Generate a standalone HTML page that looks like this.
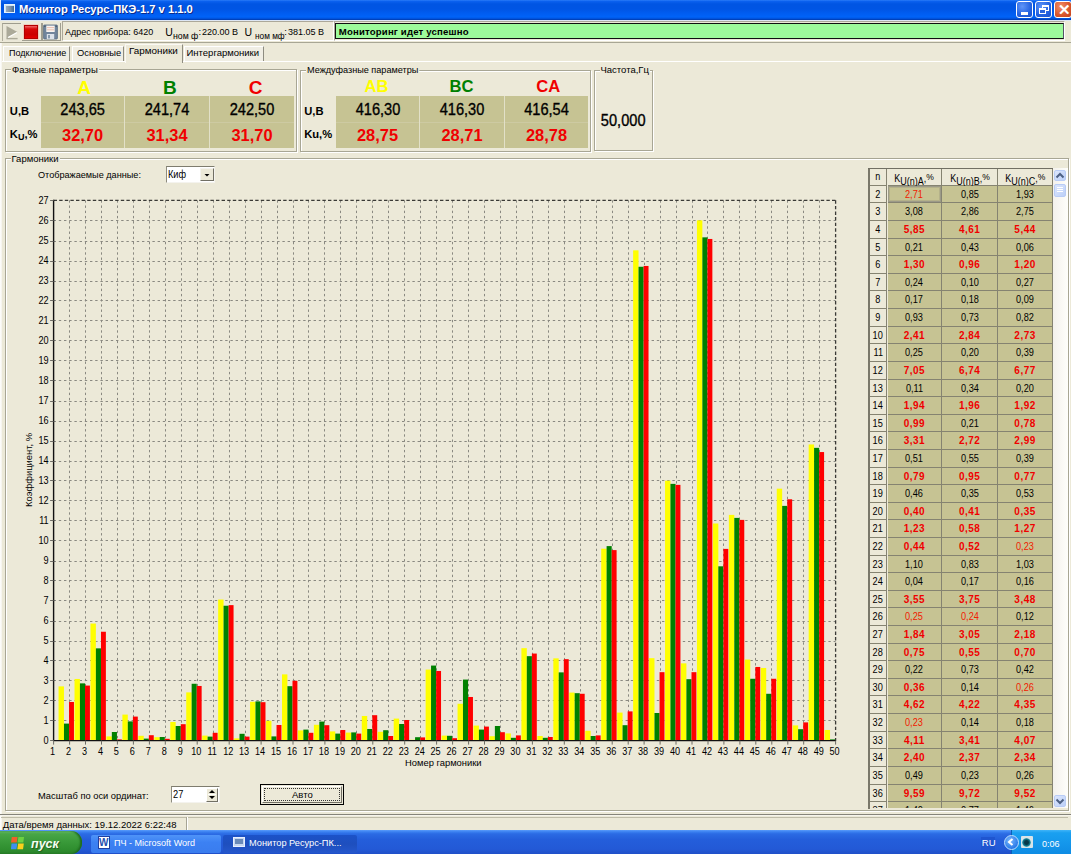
<!DOCTYPE html>
<html><head><meta charset="utf-8">
<style>
*{margin:0;padding:0;box-sizing:border-box}
html,body{width:1071px;height:854px;overflow:hidden;background:#ECE9D8;font-family:"Liberation Sans",sans-serif;font-size:9.5px;color:#000}
.abs{position:absolute}
.t{position:absolute;white-space:nowrap;line-height:1}
/* title bar */
#title{left:0;top:0;width:1071px;height:20px;background:linear-gradient(#2A7CF8 0px,#0A60EE 1.5px,#0055E3 4px,#0055E4 9px,#005CF0 13px,#0063F8 17px,#0052DC 18.6px,#0038A8 20px)}
#title .tt{left:19px;top:4px;color:#fff;font-weight:bold;font-size:11.2px;letter-spacing:0px;text-shadow:1px 1px 0 #0a2a8a}
.wb{position:absolute;top:1px;width:17px;height:17px;border:1px solid #fff;border-radius:3px;background:radial-gradient(circle at 35% 30%,#5f95f8,#2462e0 60%,#1a4fc8)}
.wb.cl{background:radial-gradient(circle at 35% 30%,#f0906a,#d9552c 60%,#c2421c)}
/* toolbar */
.panel3d{position:absolute;border-top:1px solid #fff;border-left:1px solid #fff;border-right:1px solid #ACA899;border-bottom:1px solid #ACA899}
.sunk{position:absolute;border-top:1px solid #ACA899;border-left:1px solid #ACA899;border-right:1px solid #fff;border-bottom:1px solid #fff}
/* group box */
.gb{position:absolute;border:1px solid #D0D0BF;box-shadow:inset 1px 1px 0 #fff, 1px 1px 0 #fff;border-color:#A8A694}
.gbl{position:absolute;background:#ECE9D8;padding:0 1px;line-height:1;white-space:nowrap}
.olive{position:absolute;background:#C6C393}
.big{position:absolute;font-size:16.8px;line-height:1;white-space:nowrap;text-align:center;transform:scaleX(0.87);-webkit-text-stroke:0.35px #000}
.bigr{position:absolute;font-size:16.4px;font-weight:bold;color:#F00000;line-height:1;white-space:nowrap;text-align:center}
.hdr{position:absolute;font-size:19px;font-weight:bold;line-height:1;text-align:center}
.lbl{position:absolute;font-size:11.2px;font-weight:bold;line-height:1;white-space:nowrap}
/* chart */
svg text{font-family:"Liberation Sans",sans-serif}
.g{stroke:#8A8981;stroke-width:1;stroke-dasharray:2.4 2.8}
.bd{stroke:#3A3A36;stroke-width:1.3;stroke-dasharray:3.4 2.2}
.ax{stroke:#111;stroke-width:1.4}
.tk{stroke:#6E6D66;stroke-width:1}
.lb{font-size:10.6px;fill:#000}
.lb2{font-size:9.4px;fill:#000}
/* table */
#grid{position:absolute;left:869px;top:168.3px;width:184.1px;height:640px;overflow:hidden;background:#ECE9D8}
.tr{position:absolute;left:0;width:184px;height:17.61px}
.tn,.tc,.th{position:absolute;top:0;height:17.61px;line-height:17.6px;text-align:center;font-size:10.2px;border-right:1.4px solid #858371;border-bottom:1.4px solid #858371;left:0}
.tr>div>span{display:inline-block;transform:scaleX(0.9)}
.th{height:16.8px;line-height:16px;background:#ECE9D8;font-size:10px}
.th sub{font-size:10px;vertical-align:-3px}
.th sup{font-size:9.5px;vertical-align:2px}
.tn{background:#ECE9D8}
.tc{background:#C6C393}
.tc.b{color:#F00000;font-weight:bold}
.tc.b>span{transform:none;letter-spacing:0.5px;font-size:10px}
.tc.r{color:#F02000}
.foc{box-shadow:inset 0 0 0 1px #9C9A88, inset 0 0 0 2px #B4B18A}
/* taskbar */
#task{left:0;top:830px;width:1071px;height:24px;background:linear-gradient(#5A9CFA 0%,#3A80F0 8%,#2B6BE4 16%,#245EDB 40%,#2359D6 80%,#1F4FC8 100%)}
</style></head><body>

<!-- TITLE BAR -->
<div id="title" class="abs">
  <div class="abs" style="left:0;top:0;width:1px;height:20px;background:#E8EEF8"></div><div class="abs" style="left:4px;top:4.2px;width:11.2px;height:8.8px;background:#CFE4F4;border:0.8px solid #E4F2FC"><div class="abs" style="left:0.8px;top:0.8px;width:8px;height:5.6px;background:linear-gradient(90deg,#9AAABB,#7A90A8 55%,#3E6A9A)"></div></div>
  <div class="t tt">Монитор Ресурс-ПКЭ-1.7 v 1.1.0</div>
  <div class="wb" style="left:1016px"><div class="abs" style="left:4px;top:10px;width:7px;height:3px;background:#fff"></div></div>
  <div class="wb" style="left:1035px"><div class="abs" style="left:6px;top:3px;width:7px;height:6px;border:1.5px solid #fff;border-top-width:2px"></div><div class="abs" style="left:3px;top:6px;width:7px;height:6px;border:1.5px solid #fff;border-top-width:2px;background:#2a64dc"></div></div>
  <div class="wb cl" style="left:1054px;width:18px"><div class="t" style="left:3px;top:0px;color:#fff;font-size:15px;font-weight:bold">✕</div></div>
</div>
<div class="abs" style="left:0;top:20px;width:1071px;height:1px;background:#DDE6F4"></div>

<!-- TOOLBAR -->
<div class="abs" style="left:0;top:21px;width:1071px;height:21px;background:#ECE9D8"></div>
<div class="abs" style="left:1.5px;top:22.5px;width:19.5px;height:18.5px;background:#EAE7D8;border-top:1.4px solid #9E9C8E;border-left:1.4px solid #B0AE9E"></div>
<svg class="abs" style="left:5px;top:25px" width="14" height="15"><polygon points="1.5,1 12.5,7 1.5,13.5" fill="#ABA999"/><polyline points="1.5,13.6 12.6,13.6" stroke="#ABA999" stroke-width="1.4"/><polyline points="3,12.6 12,7.6" stroke="#fff" stroke-width="1.2" fill="none"/></svg>
<div class="abs" style="left:22px;top:22.5px;width:19.5px;height:18.5px;border-right:1.2px solid #A09E90;border-bottom:1.2px solid #A09E90"></div>
<div class="abs" style="left:23.5px;top:24.6px;width:14.5px;height:14.6px;background:linear-gradient(#F26868 0%,#D80808 25%,#CC0000 70%,#E40000 100%);border:1px solid #B20000;box-shadow:0 0 0 0.6px #F4B8B0"></div>
<div class="abs" style="left:41.5px;top:22.5px;width:19.5px;height:18.5px;border-right:1.2px solid #A09E90;border-bottom:1.2px solid #A09E90;border-left:1.2px solid #A09E90"></div>
<svg class="abs" style="left:42px;top:24px" width="17" height="16"><rect x="1.6" y="1" width="13.8" height="14" rx="0.8" fill="#71859C" stroke="#56687E" stroke-width="0.8"/><rect x="4.3" y="1.6" width="8.4" height="6.4" fill="#F8F4F0"/><rect x="5" y="3.2" width="7" height="0.9" fill="#EAB8A8"/><rect x="5" y="5.4" width="7" height="0.9" fill="#EAB8A8"/><rect x="4.8" y="10" width="7.4" height="5" fill="#DCE2EA"/><rect x="6.2" y="11" width="1.6" height="3.4" fill="#71859C"/><rect x="2.4" y="1.8" width="1" height="1" fill="#2a3a4a"/><rect x="13.6" y="1.8" width="1" height="1" fill="#2a3a4a"/></svg>

<div class="sunk" style="left:61.5px;top:21.2px;width:272px;height:19.8px"></div>
<div class="t" style="left:65.2px;top:27.3px;transform:scaleX(0.946);transform-origin:0 0">Адрес прибора: 6420</div>
<div class="t" style="left:165.2px;top:26.8px;font-size:10.5px">U</div>
<div class="t" style="left:173px;top:31.2px;transform:scaleX(0.92);transform-origin:0 0">ном ф</div>
<div class="t" style="left:198.5px;top:27.3px">:</div>
<div class="t" style="left:202.3px;top:27.3px;transform:scaleX(0.95);transform-origin:0 0">220.00 В</div>
<div class="t" style="left:244.6px;top:26.8px;font-size:10.5px">U</div>
<div class="t" style="left:254.6px;top:31.2px;transform:scaleX(0.87);transform-origin:0 0">ном мф</div>
<div class="t" style="left:284.3px;top:27.3px">:</div>
<div class="t" style="left:287.8px;top:27.3px;transform:scaleX(0.95);transform-origin:0 0">381.05 В</div>

<div class="sunk" style="left:334px;top:21.2px;width:731px;height:19.8px"></div>
<div class="abs" style="left:335px;top:22.6px;width:729px;height:16.8px;background:#9DFB9B;border:1.4px solid #111;border-right-color:#556"></div>
<div class="t" style="left:338.8px;top:26.6px;font-weight:bold;font-size:9.6px;letter-spacing:0.17px">Мониторинг идет успешно</div>
<div class="abs" style="left:0;top:41.6px;width:1071px;height:1px;background:#A8A694"></div>
<div class="abs" style="left:0;top:42.6px;width:1071px;height:1px;background:#FFFFFF"></div>

<!-- TABS -->
<div class="abs" style="left:0;top:43px;width:1071px;height:18px;background:#ECE9D8"></div>
<div class="abs" style="left:3px;top:45.5px;width:67px;height:15px;background:#F0EEE4;border-left:1px solid #fff;border-top:1px solid #fff;border-right:1.4px solid #8E8C80"></div>
<div class="t" style="left:8.6px;top:47.8px;transform:scaleX(0.95);transform-origin:0 0">Подключение</div>
<div class="abs" style="left:71.5px;top:45.5px;width:52.5px;height:15px;background:#F0EEE4;border-left:1px solid #fff;border-top:1px solid #fff;border-right:1.4px solid #8E8C80"></div>
<div class="t" style="left:76.7px;top:48px;transform:scaleX(0.98);transform-origin:0 0">Основные</div>


<div class="abs" style="left:183.5px;top:45.5px;width:80px;height:15px;background:#F0EEE4;border-left:1px solid #fff;border-top:1px solid #fff;border-right:1.4px solid #8E8C80"></div>
<div class="t" style="left:186.5px;top:48px">Интергармоники</div>
<!-- tab page frame -->
<div class="abs" style="left:0;top:60.5px;width:1071px;height:1px;background:#FFFFFF"></div>
<div class="abs" style="left:124.5px;top:43.5px;width:58.5px;height:19px;background:#ECE9D8;border-left:1px solid #FAF9F4;border-top:1px solid #FAF9F4;border-right:1.4px solid #8E8C80"></div>
<div class="t" style="left:129.4px;top:46.2px;transform:scaleX(1.04);transform-origin:0 0">Гармоники</div>
<div class="abs" style="left:0;top:43px;width:2px;height:787px;background:linear-gradient(90deg,#FFFFFF,#F4F2EA)"></div>
<div class="abs" style="left:0;top:813.8px;width:1071px;height:1.4px;background:#85847A"></div>
<div class="abs" style="left:0;top:815.2px;width:1071px;height:1px;background:#F6F4EC"></div>

<!-- PHASE PARAMS -->
<div class="gb" style="left:5.2px;top:69.3px;width:291.5px;height:82.3px"></div>
<div class="gbl" style="left:11px;top:65.2px">Фазные параметры</div>
<div class="olive" style="left:40.9px;top:96.4px;width:253.3px;height:51.6px"></div>
<div class="abs" style="left:40.9px;top:122.1px;width:253.3px;height:1px;background:#CDCAA2"></div>
<div class="abs" style="left:124.2px;top:96.4px;width:1px;height:51.6px;background:#E2E0C8"></div>
<div class="abs" style="left:209.2px;top:96.4px;width:1px;height:51.6px;background:#E2E0C8"></div>
<div class="hdr" style="left:42.2px;top:77.8px;width:84px;color:#FFFF00">A</div>
<div class="hdr" style="left:127.8px;top:77.8px;width:84px;color:#008000">B</div>
<div class="hdr" style="left:213.6px;top:77.8px;width:84px;color:#F00000">C</div>
<div class="lbl" style="left:9.8px;top:106.3px">U,B</div>
<div class="lbl" style="left:9.8px;top:129.2px">K<span style="font-size:9px;position:relative;top:2px">U</span>,%</div>
<div class="big" style="left:40.9px;top:101.8px;width:83.3px">243,65</div>
<div class="big" style="left:125px;top:101.8px;width:84px">241,74</div>
<div class="big" style="left:210px;top:101.8px;width:84px">242,50</div>
<div class="bigr" style="left:40.9px;top:127.2px;width:83.3px">32,70</div>
<div class="bigr" style="left:125px;top:127.2px;width:84px">31,34</div>
<div class="bigr" style="left:210px;top:127.2px;width:84px">31,70</div>

<!-- INTERPHASE PARAMS -->
<div class="gb" style="left:299.5px;top:69.5px;width:291.5px;height:82px"></div>
<div class="gbl" style="left:305.5px;top:65.4px;transform:scaleX(0.96);transform-origin:0 0">Междуфазные параметры</div>
<div class="olive" style="left:335.5px;top:96.4px;width:252.3px;height:51.4px"></div>
<div class="abs" style="left:335.5px;top:122.1px;width:252.3px;height:1px;background:#CDCAA2"></div>
<div class="abs" style="left:419.3px;top:96.4px;width:1px;height:51.4px;background:#E2E0C8"></div>
<div class="abs" style="left:504.3px;top:96.4px;width:1px;height:51.4px;background:#E2E0C8"></div>
<div class="hdr" style="left:334.5px;top:79.4px;width:84px;font-size:16.6px;color:#FFFF00">AB</div>
<div class="hdr" style="left:419.6px;top:79.4px;width:84px;font-size:16.6px;color:#008000">BC</div>
<div class="hdr" style="left:506.2px;top:79.4px;width:84px;font-size:16.6px;color:#F00000">CA</div>
<div class="lbl" style="left:304.2px;top:105.6px">U,B</div>
<div class="lbl" style="left:304.2px;top:128.6px">Ku,%</div>
<div class="big" style="left:335.5px;top:101.8px;width:84px">416,30</div>
<div class="big" style="left:420px;top:101.8px;width:84px">416,30</div>
<div class="big" style="left:505px;top:101.8px;width:83px">416,54</div>
<div class="bigr" style="left:335.5px;top:127.2px;width:84px">28,75</div>
<div class="bigr" style="left:420px;top:127.2px;width:84px">28,71</div>
<div class="bigr" style="left:505px;top:127.2px;width:83px">28,78</div>

<!-- FREQ -->
<div class="gb" style="left:594.2px;top:69.7px;width:58.4px;height:81.8px"></div>
<div class="gbl" style="left:599.5px;top:65.4px">Частота,Гц</div>
<div class="big" style="left:594.2px;top:113px;width:58.4px">50,000</div>

<!-- HARMONICS GROUP -->
<div class="gb" style="left:5.3px;top:158.4px;width:1063.5px;height:652.4px"></div>
<div class="gbl" style="left:10.5px;top:153.8px">Гармоники</div>
<div class="t" style="left:38.4px;top:170.2px;transform:scaleX(0.96);transform-origin:0 0">Отображаемые данные:</div>
<div class="abs" style="left:165.6px;top:166.2px;width:49.6px;height:16.4px;background:#fff;border-top:1.6px solid #7E7C6E;border-left:1.6px solid #8E8C7E;border-right:1px solid #F4F3EE;border-bottom:1px solid #F4F3EE"></div>
<div class="t" style="left:168.3px;top:170px;font-size:10px;transform:scaleX(0.92);transform-origin:0 0">Киф</div>
<div class="panel3d" style="left:200px;top:167.8px;width:13.8px;height:13.6px;background:#ECE9D8;border-top-color:#F4F3EE;border-left-color:#F4F3EE;border-right:1.4px solid #716F64;border-bottom:1.4px solid #716F64"></div>
<svg class="abs" style="left:203px;top:173px" width="8" height="5"><polygon points="1.5,1 6.5,1 4,3.6" fill="#000"/></svg>

<svg class="abs" style="left:0;top:0" width="1071" height="854" viewBox="0 0 1071 854"><line x1="53.6" y1="720.5" x2="835.6" y2="720.5" class="g"/>
<line x1="53.6" y1="700.5" x2="835.6" y2="700.5" class="g"/>
<line x1="53.6" y1="680.5" x2="835.6" y2="680.5" class="g"/>
<line x1="53.6" y1="660.5" x2="835.6" y2="660.5" class="g"/>
<line x1="53.6" y1="641.5" x2="835.6" y2="641.5" class="g"/>
<line x1="53.6" y1="621.5" x2="835.6" y2="621.5" class="g"/>
<line x1="53.6" y1="600.5" x2="835.6" y2="600.5" class="g"/>
<line x1="53.6" y1="580.5" x2="835.6" y2="580.5" class="g"/>
<line x1="53.6" y1="561.5" x2="835.6" y2="561.5" class="g"/>
<line x1="53.6" y1="540.5" x2="835.6" y2="540.5" class="g"/>
<line x1="53.6" y1="520.5" x2="835.6" y2="520.5" class="g"/>
<line x1="53.6" y1="500.5" x2="835.6" y2="500.5" class="g"/>
<line x1="53.6" y1="480.5" x2="835.6" y2="480.5" class="g"/>
<line x1="53.6" y1="461.5" x2="835.6" y2="461.5" class="g"/>
<line x1="53.6" y1="441.5" x2="835.6" y2="441.5" class="g"/>
<line x1="53.6" y1="421.5" x2="835.6" y2="421.5" class="g"/>
<line x1="53.6" y1="401.5" x2="835.6" y2="401.5" class="g"/>
<line x1="53.6" y1="380.5" x2="835.6" y2="380.5" class="g"/>
<line x1="53.6" y1="360.5" x2="835.6" y2="360.5" class="g"/>
<line x1="53.6" y1="340.5" x2="835.6" y2="340.5" class="g"/>
<line x1="53.6" y1="320.5" x2="835.6" y2="320.5" class="g"/>
<line x1="53.6" y1="300.5" x2="835.6" y2="300.5" class="g"/>
<line x1="53.6" y1="281.5" x2="835.6" y2="281.5" class="g"/>
<line x1="53.6" y1="261.5" x2="835.6" y2="261.5" class="g"/>
<line x1="53.6" y1="241.5" x2="835.6" y2="241.5" class="g"/>
<line x1="53.6" y1="220.5" x2="835.6" y2="220.5" class="g"/>
<line x1="69.5" y1="200.3" x2="69.5" y2="740.6" class="g"/>
<line x1="85.5" y1="200.3" x2="85.5" y2="740.6" class="g"/>
<line x1="101.5" y1="200.3" x2="101.5" y2="740.6" class="g"/>
<line x1="117.5" y1="200.3" x2="117.5" y2="740.6" class="g"/>
<line x1="133.5" y1="200.3" x2="133.5" y2="740.6" class="g"/>
<line x1="149.5" y1="200.3" x2="149.5" y2="740.6" class="g"/>
<line x1="165.5" y1="200.3" x2="165.5" y2="740.6" class="g"/>
<line x1="181.5" y1="200.3" x2="181.5" y2="740.6" class="g"/>
<line x1="197.5" y1="200.3" x2="197.5" y2="740.6" class="g"/>
<line x1="213.5" y1="200.3" x2="213.5" y2="740.6" class="g"/>
<line x1="229.5" y1="200.3" x2="229.5" y2="740.6" class="g"/>
<line x1="245.5" y1="200.3" x2="245.5" y2="740.6" class="g"/>
<line x1="261.5" y1="200.3" x2="261.5" y2="740.6" class="g"/>
<line x1="277.5" y1="200.3" x2="277.5" y2="740.6" class="g"/>
<line x1="293.5" y1="200.3" x2="293.5" y2="740.6" class="g"/>
<line x1="308.5" y1="200.3" x2="308.5" y2="740.6" class="g"/>
<line x1="324.5" y1="200.3" x2="324.5" y2="740.6" class="g"/>
<line x1="340.5" y1="200.3" x2="340.5" y2="740.6" class="g"/>
<line x1="356.5" y1="200.3" x2="356.5" y2="740.6" class="g"/>
<line x1="372.5" y1="200.3" x2="372.5" y2="740.6" class="g"/>
<line x1="388.5" y1="200.3" x2="388.5" y2="740.6" class="g"/>
<line x1="404.5" y1="200.3" x2="404.5" y2="740.6" class="g"/>
<line x1="420.5" y1="200.3" x2="420.5" y2="740.6" class="g"/>
<line x1="436.5" y1="200.3" x2="436.5" y2="740.6" class="g"/>
<line x1="452.5" y1="200.3" x2="452.5" y2="740.6" class="g"/>
<line x1="468.5" y1="200.3" x2="468.5" y2="740.6" class="g"/>
<line x1="484.5" y1="200.3" x2="484.5" y2="740.6" class="g"/>
<line x1="500.5" y1="200.3" x2="500.5" y2="740.6" class="g"/>
<line x1="516.5" y1="200.3" x2="516.5" y2="740.6" class="g"/>
<line x1="532.5" y1="200.3" x2="532.5" y2="740.6" class="g"/>
<line x1="548.5" y1="200.3" x2="548.5" y2="740.6" class="g"/>
<line x1="564.5" y1="200.3" x2="564.5" y2="740.6" class="g"/>
<line x1="580.5" y1="200.3" x2="580.5" y2="740.6" class="g"/>
<line x1="596.5" y1="200.3" x2="596.5" y2="740.6" class="g"/>
<line x1="612.5" y1="200.3" x2="612.5" y2="740.6" class="g"/>
<line x1="628.5" y1="200.3" x2="628.5" y2="740.6" class="g"/>
<line x1="644.5" y1="200.3" x2="644.5" y2="740.6" class="g"/>
<line x1="660.5" y1="200.3" x2="660.5" y2="740.6" class="g"/>
<line x1="676.5" y1="200.3" x2="676.5" y2="740.6" class="g"/>
<line x1="692.5" y1="200.3" x2="692.5" y2="740.6" class="g"/>
<line x1="707.5" y1="200.3" x2="707.5" y2="740.6" class="g"/>
<line x1="723.5" y1="200.3" x2="723.5" y2="740.6" class="g"/>
<line x1="739.5" y1="200.3" x2="739.5" y2="740.6" class="g"/>
<line x1="755.5" y1="200.3" x2="755.5" y2="740.6" class="g"/>
<line x1="771.5" y1="200.3" x2="771.5" y2="740.6" class="g"/>
<line x1="787.5" y1="200.3" x2="787.5" y2="740.6" class="g"/>
<line x1="803.5" y1="200.3" x2="803.5" y2="740.6" class="g"/>
<line x1="819.5" y1="200.3" x2="819.5" y2="740.6" class="g"/>
<line x1="53.6" y1="200.3" x2="835.6" y2="200.3" class="bd"/>
<line x1="835.6" y1="200.3" x2="835.6" y2="740.6" class="bd"/>
<rect x="58.56" y="686.37" width="5.40" height="54.23" fill="#ffff00"/>
<rect x="63.96" y="723.59" width="5.10" height="17.01" fill="#008000"/>
<rect x="69.06" y="701.98" width="4.90" height="38.62" fill="#ff0000"/>
<rect x="74.52" y="678.97" width="5.40" height="61.63" fill="#ffff00"/>
<rect x="79.92" y="683.37" width="5.10" height="57.23" fill="#008000"/>
<rect x="85.02" y="685.57" width="4.90" height="55.03" fill="#ff0000"/>
<rect x="90.48" y="623.54" width="5.40" height="117.06" fill="#ffff00"/>
<rect x="95.88" y="648.35" width="5.10" height="92.25" fill="#008000"/>
<rect x="100.98" y="631.75" width="4.90" height="108.85" fill="#ff0000"/>
<rect x="106.44" y="736.40" width="5.40" height="4.20" fill="#ffff00"/>
<rect x="111.84" y="732.00" width="5.10" height="8.60" fill="#008000"/>
<rect x="116.94" y="739.40" width="4.90" height="1.20" fill="#ff0000"/>
<rect x="122.40" y="714.59" width="5.40" height="26.01" fill="#ffff00"/>
<rect x="127.80" y="721.39" width="5.10" height="19.21" fill="#008000"/>
<rect x="132.90" y="716.59" width="4.90" height="24.01" fill="#ff0000"/>
<rect x="138.36" y="735.80" width="5.40" height="4.80" fill="#ffff00"/>
<rect x="143.76" y="738.60" width="5.10" height="2.00" fill="#008000"/>
<rect x="148.86" y="735.20" width="4.90" height="5.40" fill="#ff0000"/>
<rect x="154.32" y="737.20" width="5.40" height="3.40" fill="#ffff00"/>
<rect x="159.72" y="737.00" width="5.10" height="3.60" fill="#008000"/>
<rect x="164.82" y="738.80" width="4.90" height="1.80" fill="#ff0000"/>
<rect x="170.28" y="721.99" width="5.40" height="18.61" fill="#ffff00"/>
<rect x="175.68" y="725.99" width="5.10" height="14.61" fill="#008000"/>
<rect x="180.78" y="724.19" width="4.90" height="16.41" fill="#ff0000"/>
<rect x="186.24" y="692.38" width="5.40" height="48.22" fill="#ffff00"/>
<rect x="191.64" y="683.77" width="5.10" height="56.83" fill="#008000"/>
<rect x="196.74" y="685.97" width="4.90" height="54.63" fill="#ff0000"/>
<rect x="202.20" y="735.60" width="5.40" height="5.00" fill="#ffff00"/>
<rect x="207.60" y="736.60" width="5.10" height="4.00" fill="#008000"/>
<rect x="212.70" y="732.80" width="4.90" height="7.80" fill="#ff0000"/>
<rect x="218.16" y="599.53" width="5.40" height="141.07" fill="#ffff00"/>
<rect x="223.56" y="605.73" width="5.10" height="134.87" fill="#008000"/>
<rect x="228.66" y="605.13" width="4.90" height="135.47" fill="#ff0000"/>
<rect x="234.12" y="738.40" width="5.40" height="2.20" fill="#ffff00"/>
<rect x="239.52" y="733.80" width="5.10" height="6.80" fill="#008000"/>
<rect x="244.62" y="736.60" width="4.90" height="4.00" fill="#ff0000"/>
<rect x="250.08" y="701.78" width="5.40" height="38.82" fill="#ffff00"/>
<rect x="255.48" y="701.38" width="5.10" height="39.22" fill="#008000"/>
<rect x="260.58" y="702.18" width="4.90" height="38.42" fill="#ff0000"/>
<rect x="266.04" y="720.79" width="5.40" height="19.81" fill="#ffff00"/>
<rect x="271.44" y="736.40" width="5.10" height="4.20" fill="#008000"/>
<rect x="276.54" y="724.99" width="4.90" height="15.61" fill="#ff0000"/>
<rect x="282.00" y="674.37" width="5.40" height="66.23" fill="#ffff00"/>
<rect x="287.40" y="686.17" width="5.10" height="54.43" fill="#008000"/>
<rect x="292.50" y="680.77" width="4.90" height="59.83" fill="#ff0000"/>
<rect x="297.96" y="730.39" width="5.40" height="10.21" fill="#ffff00"/>
<rect x="303.36" y="729.59" width="5.10" height="11.01" fill="#008000"/>
<rect x="308.46" y="732.80" width="4.90" height="7.80" fill="#ff0000"/>
<rect x="313.92" y="724.79" width="5.40" height="15.81" fill="#ffff00"/>
<rect x="319.32" y="721.59" width="5.10" height="19.01" fill="#008000"/>
<rect x="324.42" y="725.19" width="4.90" height="15.41" fill="#ff0000"/>
<rect x="329.88" y="731.40" width="5.40" height="9.20" fill="#ffff00"/>
<rect x="335.28" y="733.60" width="5.10" height="7.00" fill="#008000"/>
<rect x="340.38" y="729.99" width="4.90" height="10.61" fill="#ff0000"/>
<rect x="345.84" y="732.60" width="5.40" height="8.00" fill="#ffff00"/>
<rect x="351.24" y="732.40" width="5.10" height="8.20" fill="#008000"/>
<rect x="356.34" y="733.60" width="4.90" height="7.00" fill="#ff0000"/>
<rect x="361.80" y="715.99" width="5.40" height="24.61" fill="#ffff00"/>
<rect x="367.20" y="728.99" width="5.10" height="11.61" fill="#008000"/>
<rect x="372.30" y="715.19" width="4.90" height="25.41" fill="#ff0000"/>
<rect x="377.76" y="731.80" width="5.40" height="8.80" fill="#ffff00"/>
<rect x="383.16" y="730.19" width="5.10" height="10.41" fill="#008000"/>
<rect x="388.26" y="736.00" width="4.90" height="4.60" fill="#ff0000"/>
<rect x="393.72" y="718.59" width="5.40" height="22.01" fill="#ffff00"/>
<rect x="399.12" y="723.99" width="5.10" height="16.61" fill="#008000"/>
<rect x="404.22" y="719.99" width="4.90" height="20.61" fill="#ff0000"/>
<rect x="409.68" y="739.80" width="5.40" height="0.80" fill="#ffff00"/>
<rect x="415.08" y="737.20" width="5.10" height="3.40" fill="#008000"/>
<rect x="420.18" y="737.40" width="4.90" height="3.20" fill="#ff0000"/>
<rect x="425.64" y="669.56" width="5.40" height="71.04" fill="#ffff00"/>
<rect x="431.04" y="665.56" width="5.10" height="75.04" fill="#008000"/>
<rect x="436.14" y="670.97" width="4.90" height="69.63" fill="#ff0000"/>
<rect x="441.60" y="735.60" width="5.40" height="5.00" fill="#ffff00"/>
<rect x="447.00" y="735.80" width="5.10" height="4.80" fill="#008000"/>
<rect x="452.10" y="738.20" width="4.90" height="2.40" fill="#ff0000"/>
<rect x="457.56" y="703.78" width="5.40" height="36.82" fill="#ffff00"/>
<rect x="462.96" y="679.57" width="5.10" height="61.03" fill="#008000"/>
<rect x="468.06" y="696.98" width="4.90" height="43.62" fill="#ff0000"/>
<rect x="473.52" y="725.59" width="5.40" height="15.01" fill="#ffff00"/>
<rect x="478.92" y="729.59" width="5.10" height="11.01" fill="#008000"/>
<rect x="484.02" y="726.59" width="4.90" height="14.01" fill="#ff0000"/>
<rect x="489.48" y="736.20" width="5.40" height="4.40" fill="#ffff00"/>
<rect x="494.88" y="725.99" width="5.10" height="14.61" fill="#008000"/>
<rect x="499.98" y="732.20" width="4.90" height="8.40" fill="#ff0000"/>
<rect x="505.44" y="733.40" width="5.40" height="7.20" fill="#ffff00"/>
<rect x="510.84" y="737.80" width="5.10" height="2.80" fill="#008000"/>
<rect x="515.94" y="735.40" width="4.90" height="5.20" fill="#ff0000"/>
<rect x="521.40" y="648.15" width="5.40" height="92.45" fill="#ffff00"/>
<rect x="526.80" y="656.16" width="5.10" height="84.44" fill="#008000"/>
<rect x="531.90" y="653.56" width="4.90" height="87.04" fill="#ff0000"/>
<rect x="537.36" y="736.00" width="5.40" height="4.60" fill="#ffff00"/>
<rect x="542.76" y="737.80" width="5.10" height="2.80" fill="#008000"/>
<rect x="547.86" y="737.00" width="4.90" height="3.60" fill="#ff0000"/>
<rect x="553.32" y="658.36" width="5.40" height="82.24" fill="#ffff00"/>
<rect x="558.72" y="672.37" width="5.10" height="68.23" fill="#008000"/>
<rect x="563.82" y="659.16" width="4.90" height="81.44" fill="#ff0000"/>
<rect x="569.28" y="692.58" width="5.40" height="48.02" fill="#ffff00"/>
<rect x="574.68" y="693.18" width="5.10" height="47.42" fill="#008000"/>
<rect x="579.78" y="693.78" width="4.90" height="46.82" fill="#ff0000"/>
<rect x="585.24" y="730.80" width="5.40" height="9.80" fill="#ffff00"/>
<rect x="590.64" y="736.00" width="5.10" height="4.60" fill="#008000"/>
<rect x="595.74" y="735.40" width="4.90" height="5.20" fill="#ff0000"/>
<rect x="601.20" y="548.70" width="5.40" height="191.90" fill="#ffff00"/>
<rect x="606.60" y="546.10" width="5.10" height="194.50" fill="#008000"/>
<rect x="611.70" y="550.10" width="4.90" height="190.50" fill="#ff0000"/>
<rect x="617.16" y="712.59" width="5.40" height="28.01" fill="#ffff00"/>
<rect x="622.56" y="725.19" width="5.10" height="15.41" fill="#008000"/>
<rect x="627.66" y="711.39" width="4.90" height="29.21" fill="#ff0000"/>
<rect x="633.12" y="250.35" width="5.40" height="490.25" fill="#ffff00"/>
<rect x="638.52" y="266.76" width="5.10" height="473.84" fill="#008000"/>
<rect x="643.62" y="265.96" width="4.90" height="474.64" fill="#ff0000"/>
<rect x="649.08" y="658.16" width="5.40" height="82.44" fill="#ffff00"/>
<rect x="654.48" y="712.99" width="5.10" height="27.61" fill="#008000"/>
<rect x="659.58" y="672.17" width="4.90" height="68.43" fill="#ff0000"/>
<rect x="665.04" y="480.67" width="5.40" height="259.93" fill="#ffff00"/>
<rect x="670.44" y="483.87" width="5.10" height="256.73" fill="#008000"/>
<rect x="675.54" y="484.87" width="4.90" height="255.73" fill="#ff0000"/>
<rect x="681.00" y="663.36" width="5.40" height="77.24" fill="#ffff00"/>
<rect x="686.40" y="679.17" width="5.10" height="61.43" fill="#008000"/>
<rect x="691.50" y="672.17" width="4.90" height="68.43" fill="#ff0000"/>
<rect x="696.96" y="220.34" width="5.40" height="520.26" fill="#ffff00"/>
<rect x="702.36" y="237.35" width="5.10" height="503.25" fill="#008000"/>
<rect x="707.46" y="238.95" width="4.90" height="501.65" fill="#ff0000"/>
<rect x="712.92" y="523.49" width="5.40" height="217.11" fill="#ffff00"/>
<rect x="718.32" y="566.31" width="5.10" height="174.29" fill="#008000"/>
<rect x="723.42" y="548.90" width="4.90" height="191.70" fill="#ff0000"/>
<rect x="728.88" y="514.89" width="5.40" height="225.71" fill="#ffff00"/>
<rect x="734.28" y="517.89" width="5.10" height="222.71" fill="#008000"/>
<rect x="739.38" y="519.89" width="4.90" height="220.71" fill="#ff0000"/>
<rect x="744.84" y="659.56" width="5.40" height="81.04" fill="#ffff00"/>
<rect x="750.24" y="678.77" width="5.10" height="61.83" fill="#008000"/>
<rect x="755.34" y="666.96" width="4.90" height="73.64" fill="#ff0000"/>
<rect x="760.80" y="667.96" width="5.40" height="72.64" fill="#ffff00"/>
<rect x="766.20" y="693.78" width="5.10" height="46.82" fill="#008000"/>
<rect x="771.30" y="678.77" width="4.90" height="61.83" fill="#ff0000"/>
<rect x="776.76" y="488.67" width="5.40" height="251.93" fill="#ffff00"/>
<rect x="782.16" y="505.88" width="5.10" height="234.72" fill="#008000"/>
<rect x="787.26" y="499.28" width="4.90" height="241.32" fill="#ff0000"/>
<rect x="792.72" y="725.39" width="5.40" height="15.21" fill="#ffff00"/>
<rect x="798.12" y="729.19" width="5.10" height="11.41" fill="#008000"/>
<rect x="803.22" y="722.39" width="4.90" height="18.21" fill="#ff0000"/>
<rect x="808.68" y="444.45" width="5.40" height="296.15" fill="#ffff00"/>
<rect x="814.08" y="447.85" width="5.10" height="292.75" fill="#008000"/>
<rect x="819.18" y="452.06" width="4.90" height="288.54" fill="#ff0000"/>
<rect x="824.64" y="729.99" width="5.40" height="10.61" fill="#ffff00"/>
<rect x="830.04" y="739.40" width="5.10" height="1.20" fill="#008000"/>
<line x1="53.6" y1="199.8" x2="53.6" y2="741.1" class="ax"/>
<line x1="53.1" y1="740.6" x2="836.1" y2="740.6" class="ax"/>
<line x1="50.1" y1="740.5" x2="53.6" y2="740.5" class="tk"/>
<text transform="translate(48.6,744.2) scale(0.86,1)" text-anchor="end" class="lb">0</text>
<line x1="50.1" y1="720.5" x2="53.6" y2="720.5" class="tk"/>
<text transform="translate(48.6,724.2) scale(0.86,1)" text-anchor="end" class="lb">1</text>
<line x1="50.1" y1="700.5" x2="53.6" y2="700.5" class="tk"/>
<text transform="translate(48.6,704.2) scale(0.86,1)" text-anchor="end" class="lb">2</text>
<line x1="50.1" y1="680.5" x2="53.6" y2="680.5" class="tk"/>
<text transform="translate(48.6,684.2) scale(0.86,1)" text-anchor="end" class="lb">3</text>
<line x1="50.1" y1="660.5" x2="53.6" y2="660.5" class="tk"/>
<text transform="translate(48.6,664.2) scale(0.86,1)" text-anchor="end" class="lb">4</text>
<line x1="50.1" y1="641.5" x2="53.6" y2="641.5" class="tk"/>
<text transform="translate(48.6,644.1) scale(0.86,1)" text-anchor="end" class="lb">5</text>
<line x1="50.1" y1="621.5" x2="53.6" y2="621.5" class="tk"/>
<text transform="translate(48.6,624.1) scale(0.86,1)" text-anchor="end" class="lb">6</text>
<line x1="50.1" y1="600.5" x2="53.6" y2="600.5" class="tk"/>
<text transform="translate(48.6,604.1) scale(0.86,1)" text-anchor="end" class="lb">7</text>
<line x1="50.1" y1="580.5" x2="53.6" y2="580.5" class="tk"/>
<text transform="translate(48.6,584.1) scale(0.86,1)" text-anchor="end" class="lb">8</text>
<line x1="50.1" y1="561.5" x2="53.6" y2="561.5" class="tk"/>
<text transform="translate(48.6,564.1) scale(0.86,1)" text-anchor="end" class="lb">9</text>
<line x1="50.1" y1="540.5" x2="53.6" y2="540.5" class="tk"/>
<text transform="translate(48.6,544.1) scale(0.86,1)" text-anchor="end" class="lb">10</text>
<line x1="50.1" y1="520.5" x2="53.6" y2="520.5" class="tk"/>
<text transform="translate(48.6,524.1) scale(0.86,1)" text-anchor="end" class="lb">11</text>
<line x1="50.1" y1="500.5" x2="53.6" y2="500.5" class="tk"/>
<text transform="translate(48.6,504.1) scale(0.86,1)" text-anchor="end" class="lb">12</text>
<line x1="50.1" y1="480.5" x2="53.6" y2="480.5" class="tk"/>
<text transform="translate(48.6,484.1) scale(0.86,1)" text-anchor="end" class="lb">13</text>
<line x1="50.1" y1="461.5" x2="53.6" y2="461.5" class="tk"/>
<text transform="translate(48.6,464.1) scale(0.86,1)" text-anchor="end" class="lb">14</text>
<line x1="50.1" y1="441.5" x2="53.6" y2="441.5" class="tk"/>
<text transform="translate(48.6,444.1) scale(0.86,1)" text-anchor="end" class="lb">15</text>
<line x1="50.1" y1="421.5" x2="53.6" y2="421.5" class="tk"/>
<text transform="translate(48.6,424.0) scale(0.86,1)" text-anchor="end" class="lb">16</text>
<line x1="50.1" y1="401.5" x2="53.6" y2="401.5" class="tk"/>
<text transform="translate(48.6,404.0) scale(0.86,1)" text-anchor="end" class="lb">17</text>
<line x1="50.1" y1="380.5" x2="53.6" y2="380.5" class="tk"/>
<text transform="translate(48.6,384.0) scale(0.86,1)" text-anchor="end" class="lb">18</text>
<line x1="50.1" y1="360.5" x2="53.6" y2="360.5" class="tk"/>
<text transform="translate(48.6,364.0) scale(0.86,1)" text-anchor="end" class="lb">19</text>
<line x1="50.1" y1="340.5" x2="53.6" y2="340.5" class="tk"/>
<text transform="translate(48.6,344.0) scale(0.86,1)" text-anchor="end" class="lb">20</text>
<line x1="50.1" y1="320.5" x2="53.6" y2="320.5" class="tk"/>
<text transform="translate(48.6,324.0) scale(0.86,1)" text-anchor="end" class="lb">21</text>
<line x1="50.1" y1="300.5" x2="53.6" y2="300.5" class="tk"/>
<text transform="translate(48.6,304.0) scale(0.86,1)" text-anchor="end" class="lb">22</text>
<line x1="50.1" y1="281.5" x2="53.6" y2="281.5" class="tk"/>
<text transform="translate(48.6,284.0) scale(0.86,1)" text-anchor="end" class="lb">23</text>
<line x1="50.1" y1="261.5" x2="53.6" y2="261.5" class="tk"/>
<text transform="translate(48.6,264.0) scale(0.86,1)" text-anchor="end" class="lb">24</text>
<line x1="50.1" y1="241.5" x2="53.6" y2="241.5" class="tk"/>
<text transform="translate(48.6,243.9) scale(0.86,1)" text-anchor="end" class="lb">25</text>
<line x1="50.1" y1="220.5" x2="53.6" y2="220.5" class="tk"/>
<text transform="translate(48.6,223.9) scale(0.86,1)" text-anchor="end" class="lb">26</text>
<line x1="50.1" y1="200.5" x2="53.6" y2="200.5" class="tk"/>
<text transform="translate(48.6,203.9) scale(0.86,1)" text-anchor="end" class="lb">27</text>
<line x1="53.6" y1="740.6" x2="53.6" y2="744.6" class="tk"/>
<text transform="translate(52.6,755.2) scale(0.86,1)" text-anchor="middle" class="lb">1</text>
<line x1="69.6" y1="740.6" x2="69.6" y2="744.6" class="tk"/>
<text transform="translate(68.6,755.2) scale(0.86,1)" text-anchor="middle" class="lb">2</text>
<line x1="85.5" y1="740.6" x2="85.5" y2="744.6" class="tk"/>
<text transform="translate(84.5,755.2) scale(0.86,1)" text-anchor="middle" class="lb">3</text>
<line x1="101.5" y1="740.6" x2="101.5" y2="744.6" class="tk"/>
<text transform="translate(100.5,755.2) scale(0.86,1)" text-anchor="middle" class="lb">4</text>
<line x1="117.4" y1="740.6" x2="117.4" y2="744.6" class="tk"/>
<text transform="translate(116.4,755.2) scale(0.86,1)" text-anchor="middle" class="lb">5</text>
<line x1="133.4" y1="740.6" x2="133.4" y2="744.6" class="tk"/>
<text transform="translate(132.4,755.2) scale(0.86,1)" text-anchor="middle" class="lb">6</text>
<line x1="149.4" y1="740.6" x2="149.4" y2="744.6" class="tk"/>
<text transform="translate(148.4,755.2) scale(0.86,1)" text-anchor="middle" class="lb">7</text>
<line x1="165.3" y1="740.6" x2="165.3" y2="744.6" class="tk"/>
<text transform="translate(164.3,755.2) scale(0.86,1)" text-anchor="middle" class="lb">8</text>
<line x1="181.3" y1="740.6" x2="181.3" y2="744.6" class="tk"/>
<text transform="translate(180.3,755.2) scale(0.86,1)" text-anchor="middle" class="lb">9</text>
<line x1="197.2" y1="740.6" x2="197.2" y2="744.6" class="tk"/>
<text transform="translate(196.2,755.2) scale(0.86,1)" text-anchor="middle" class="lb">10</text>
<line x1="213.2" y1="740.6" x2="213.2" y2="744.6" class="tk"/>
<text transform="translate(212.2,755.2) scale(0.86,1)" text-anchor="middle" class="lb">11</text>
<line x1="229.2" y1="740.6" x2="229.2" y2="744.6" class="tk"/>
<text transform="translate(228.2,755.2) scale(0.86,1)" text-anchor="middle" class="lb">12</text>
<line x1="245.1" y1="740.6" x2="245.1" y2="744.6" class="tk"/>
<text transform="translate(244.1,755.2) scale(0.86,1)" text-anchor="middle" class="lb">13</text>
<line x1="261.1" y1="740.6" x2="261.1" y2="744.6" class="tk"/>
<text transform="translate(260.1,755.2) scale(0.86,1)" text-anchor="middle" class="lb">14</text>
<line x1="277.0" y1="740.6" x2="277.0" y2="744.6" class="tk"/>
<text transform="translate(276.0,755.2) scale(0.86,1)" text-anchor="middle" class="lb">15</text>
<line x1="293.0" y1="740.6" x2="293.0" y2="744.6" class="tk"/>
<text transform="translate(292.0,755.2) scale(0.86,1)" text-anchor="middle" class="lb">16</text>
<line x1="309.0" y1="740.6" x2="309.0" y2="744.6" class="tk"/>
<text transform="translate(308.0,755.2) scale(0.86,1)" text-anchor="middle" class="lb">17</text>
<line x1="324.9" y1="740.6" x2="324.9" y2="744.6" class="tk"/>
<text transform="translate(323.9,755.2) scale(0.86,1)" text-anchor="middle" class="lb">18</text>
<line x1="340.9" y1="740.6" x2="340.9" y2="744.6" class="tk"/>
<text transform="translate(339.9,755.2) scale(0.86,1)" text-anchor="middle" class="lb">19</text>
<line x1="356.8" y1="740.6" x2="356.8" y2="744.6" class="tk"/>
<text transform="translate(355.8,755.2) scale(0.86,1)" text-anchor="middle" class="lb">20</text>
<line x1="372.8" y1="740.6" x2="372.8" y2="744.6" class="tk"/>
<text transform="translate(371.8,755.2) scale(0.86,1)" text-anchor="middle" class="lb">21</text>
<line x1="388.8" y1="740.6" x2="388.8" y2="744.6" class="tk"/>
<text transform="translate(387.8,755.2) scale(0.86,1)" text-anchor="middle" class="lb">22</text>
<line x1="404.7" y1="740.6" x2="404.7" y2="744.6" class="tk"/>
<text transform="translate(403.7,755.2) scale(0.86,1)" text-anchor="middle" class="lb">23</text>
<line x1="420.7" y1="740.6" x2="420.7" y2="744.6" class="tk"/>
<text transform="translate(419.7,755.2) scale(0.86,1)" text-anchor="middle" class="lb">24</text>
<line x1="436.6" y1="740.6" x2="436.6" y2="744.6" class="tk"/>
<text transform="translate(435.6,755.2) scale(0.86,1)" text-anchor="middle" class="lb">25</text>
<line x1="452.6" y1="740.6" x2="452.6" y2="744.6" class="tk"/>
<text transform="translate(451.6,755.2) scale(0.86,1)" text-anchor="middle" class="lb">26</text>
<line x1="468.6" y1="740.6" x2="468.6" y2="744.6" class="tk"/>
<text transform="translate(467.6,755.2) scale(0.86,1)" text-anchor="middle" class="lb">27</text>
<line x1="484.5" y1="740.6" x2="484.5" y2="744.6" class="tk"/>
<text transform="translate(483.5,755.2) scale(0.86,1)" text-anchor="middle" class="lb">28</text>
<line x1="500.5" y1="740.6" x2="500.5" y2="744.6" class="tk"/>
<text transform="translate(499.5,755.2) scale(0.86,1)" text-anchor="middle" class="lb">29</text>
<line x1="516.4" y1="740.6" x2="516.4" y2="744.6" class="tk"/>
<text transform="translate(515.4,755.2) scale(0.86,1)" text-anchor="middle" class="lb">30</text>
<line x1="532.4" y1="740.6" x2="532.4" y2="744.6" class="tk"/>
<text transform="translate(531.4,755.2) scale(0.86,1)" text-anchor="middle" class="lb">31</text>
<line x1="548.4" y1="740.6" x2="548.4" y2="744.6" class="tk"/>
<text transform="translate(547.4,755.2) scale(0.86,1)" text-anchor="middle" class="lb">32</text>
<line x1="564.3" y1="740.6" x2="564.3" y2="744.6" class="tk"/>
<text transform="translate(563.3,755.2) scale(0.86,1)" text-anchor="middle" class="lb">33</text>
<line x1="580.3" y1="740.6" x2="580.3" y2="744.6" class="tk"/>
<text transform="translate(579.3,755.2) scale(0.86,1)" text-anchor="middle" class="lb">34</text>
<line x1="596.2" y1="740.6" x2="596.2" y2="744.6" class="tk"/>
<text transform="translate(595.2,755.2) scale(0.86,1)" text-anchor="middle" class="lb">35</text>
<line x1="612.2" y1="740.6" x2="612.2" y2="744.6" class="tk"/>
<text transform="translate(611.2,755.2) scale(0.86,1)" text-anchor="middle" class="lb">36</text>
<line x1="628.2" y1="740.6" x2="628.2" y2="744.6" class="tk"/>
<text transform="translate(627.2,755.2) scale(0.86,1)" text-anchor="middle" class="lb">37</text>
<line x1="644.1" y1="740.6" x2="644.1" y2="744.6" class="tk"/>
<text transform="translate(643.1,755.2) scale(0.86,1)" text-anchor="middle" class="lb">38</text>
<line x1="660.1" y1="740.6" x2="660.1" y2="744.6" class="tk"/>
<text transform="translate(659.1,755.2) scale(0.86,1)" text-anchor="middle" class="lb">39</text>
<line x1="676.0" y1="740.6" x2="676.0" y2="744.6" class="tk"/>
<text transform="translate(675.0,755.2) scale(0.86,1)" text-anchor="middle" class="lb">40</text>
<line x1="692.0" y1="740.6" x2="692.0" y2="744.6" class="tk"/>
<text transform="translate(691.0,755.2) scale(0.86,1)" text-anchor="middle" class="lb">41</text>
<line x1="708.0" y1="740.6" x2="708.0" y2="744.6" class="tk"/>
<text transform="translate(707.0,755.2) scale(0.86,1)" text-anchor="middle" class="lb">42</text>
<line x1="723.9" y1="740.6" x2="723.9" y2="744.6" class="tk"/>
<text transform="translate(722.9,755.2) scale(0.86,1)" text-anchor="middle" class="lb">43</text>
<line x1="739.9" y1="740.6" x2="739.9" y2="744.6" class="tk"/>
<text transform="translate(738.9,755.2) scale(0.86,1)" text-anchor="middle" class="lb">44</text>
<line x1="755.8" y1="740.6" x2="755.8" y2="744.6" class="tk"/>
<text transform="translate(754.8,755.2) scale(0.86,1)" text-anchor="middle" class="lb">45</text>
<line x1="771.8" y1="740.6" x2="771.8" y2="744.6" class="tk"/>
<text transform="translate(770.8,755.2) scale(0.86,1)" text-anchor="middle" class="lb">46</text>
<line x1="787.8" y1="740.6" x2="787.8" y2="744.6" class="tk"/>
<text transform="translate(786.8,755.2) scale(0.86,1)" text-anchor="middle" class="lb">47</text>
<line x1="803.7" y1="740.6" x2="803.7" y2="744.6" class="tk"/>
<text transform="translate(802.7,755.2) scale(0.86,1)" text-anchor="middle" class="lb">48</text>
<line x1="819.7" y1="740.6" x2="819.7" y2="744.6" class="tk"/>
<text transform="translate(818.7,755.2) scale(0.86,1)" text-anchor="middle" class="lb">49</text>
<line x1="835.6" y1="740.6" x2="835.6" y2="744.6" class="tk"/>
<text transform="translate(834.6,755.2) scale(0.86,1)" text-anchor="middle" class="lb">50</text>
<text x="443.3" y="765.8" text-anchor="middle" class="lb2">Номер гармоники</text>
<text transform="translate(31.8,470) rotate(-90)" x="0" y="0" text-anchor="middle" class="lb2">Коэффициент, %</text></svg>

<div class="t" style="left:38.3px;top:790.6px;transform:scaleX(0.98);transform-origin:0 0">Масштаб по оси ординат:</div>
<div class="abs" style="left:171px;top:786.3px;width:48.5px;height:16.6px;background:#fff;border-top:1.6px solid #7E7C6E;border-left:1.6px solid #8E8C7E;border-right:1px solid #F4F3EE;border-bottom:1px solid #F4F3EE"></div>
<div class="t" style="left:173.3px;top:789px;font-size:10.5px;transform:scaleX(0.88);transform-origin:0 0">27</div>
<div class="panel3d" style="left:206px;top:787.5px;width:12px;height:14px;background:#ECE9D8;border-right-color:#716F64;border-bottom-color:#716F64"></div>
<svg class="abs" style="left:207px;top:788px" width="10" height="13"><polygon points="2,5 8,5 5,2" fill="#000"/><polygon points="2,8 8,8 5,11" fill="#000"/><line x1="1" y1="6.5" x2="9" y2="6.5" stroke="#fff" stroke-width="1"/></svg>
<div class="abs" style="left:260.2px;top:783.8px;width:83.8px;height:21px;border:1.4px solid #000;background:#ECE9D8"><div class="abs" style="left:1px;top:1px;right:1px;bottom:1px;border-right:1px solid #716F64;border-bottom:1px solid #716F64;border-left:1px solid #fff;border-top:1px solid #fff"></div><div class="abs" style="left:3px;top:3px;right:3px;bottom:3px;border:1px dotted #333"></div></div>
<div class="t" style="left:292px;top:790px">Авто</div>

<!-- TABLE -->
<div id="grid">
  <div class="tr" style="top:0.7px;height:16.8px">
    <div class="th" style="left:0.7px;width:17.8px"><span>n</span></div>
    <div class="th" style="left:18.5px;width:54.8px"><span>K<sub>U(n)A</sub>,<sup>%</sup></span></div>
    <div class="th" style="left:73.3px;width:55.8px"><span>K<sub>U(n)B</sub>,<sup>%</sup></span></div>
    <div class="th" style="left:129.1px;width:55px"><span>K<sub>U(n)C</sub>,<sup>%</sup></span></div>
  </div>
<div class="tr" style="top:17.50px"><div class="tn" style="left:0.7px;width:17.80px"><span>2</span></div><div class="tc r foc" style="left:18.50px;width:54.80px"><span>2,71</span></div><div class="tc k" style="left:73.30px;width:55.80px"><span>0,85</span></div><div class="tc k" style="left:129.10px;width:55.00px"><span>1,93</span></div></div>
<div class="tr" style="top:35.11px"><div class="tn" style="left:0.7px;width:17.80px"><span>3</span></div><div class="tc k" style="left:18.50px;width:54.80px"><span>3,08</span></div><div class="tc k" style="left:73.30px;width:55.80px"><span>2,86</span></div><div class="tc k" style="left:129.10px;width:55.00px"><span>2,75</span></div></div>
<div class="tr" style="top:52.72px"><div class="tn" style="left:0.7px;width:17.80px"><span>4</span></div><div class="tc b" style="left:18.50px;width:54.80px"><span>5,85</span></div><div class="tc b" style="left:73.30px;width:55.80px"><span>4,61</span></div><div class="tc b" style="left:129.10px;width:55.00px"><span>5,44</span></div></div>
<div class="tr" style="top:70.33px"><div class="tn" style="left:0.7px;width:17.80px"><span>5</span></div><div class="tc k" style="left:18.50px;width:54.80px"><span>0,21</span></div><div class="tc k" style="left:73.30px;width:55.80px"><span>0,43</span></div><div class="tc k" style="left:129.10px;width:55.00px"><span>0,06</span></div></div>
<div class="tr" style="top:87.94px"><div class="tn" style="left:0.7px;width:17.80px"><span>6</span></div><div class="tc b" style="left:18.50px;width:54.80px"><span>1,30</span></div><div class="tc b" style="left:73.30px;width:55.80px"><span>0,96</span></div><div class="tc b" style="left:129.10px;width:55.00px"><span>1,20</span></div></div>
<div class="tr" style="top:105.55px"><div class="tn" style="left:0.7px;width:17.80px"><span>7</span></div><div class="tc k" style="left:18.50px;width:54.80px"><span>0,24</span></div><div class="tc k" style="left:73.30px;width:55.80px"><span>0,10</span></div><div class="tc k" style="left:129.10px;width:55.00px"><span>0,27</span></div></div>
<div class="tr" style="top:123.16px"><div class="tn" style="left:0.7px;width:17.80px"><span>8</span></div><div class="tc k" style="left:18.50px;width:54.80px"><span>0,17</span></div><div class="tc k" style="left:73.30px;width:55.80px"><span>0,18</span></div><div class="tc k" style="left:129.10px;width:55.00px"><span>0,09</span></div></div>
<div class="tr" style="top:140.77px"><div class="tn" style="left:0.7px;width:17.80px"><span>9</span></div><div class="tc k" style="left:18.50px;width:54.80px"><span>0,93</span></div><div class="tc k" style="left:73.30px;width:55.80px"><span>0,73</span></div><div class="tc k" style="left:129.10px;width:55.00px"><span>0,82</span></div></div>
<div class="tr" style="top:158.38px"><div class="tn" style="left:0.7px;width:17.80px"><span>10</span></div><div class="tc b" style="left:18.50px;width:54.80px"><span>2,41</span></div><div class="tc b" style="left:73.30px;width:55.80px"><span>2,84</span></div><div class="tc b" style="left:129.10px;width:55.00px"><span>2,73</span></div></div>
<div class="tr" style="top:175.99px"><div class="tn" style="left:0.7px;width:17.80px"><span>11</span></div><div class="tc k" style="left:18.50px;width:54.80px"><span>0,25</span></div><div class="tc k" style="left:73.30px;width:55.80px"><span>0,20</span></div><div class="tc k" style="left:129.10px;width:55.00px"><span>0,39</span></div></div>
<div class="tr" style="top:193.60px"><div class="tn" style="left:0.7px;width:17.80px"><span>12</span></div><div class="tc b" style="left:18.50px;width:54.80px"><span>7,05</span></div><div class="tc b" style="left:73.30px;width:55.80px"><span>6,74</span></div><div class="tc b" style="left:129.10px;width:55.00px"><span>6,77</span></div></div>
<div class="tr" style="top:211.21px"><div class="tn" style="left:0.7px;width:17.80px"><span>13</span></div><div class="tc k" style="left:18.50px;width:54.80px"><span>0,11</span></div><div class="tc k" style="left:73.30px;width:55.80px"><span>0,34</span></div><div class="tc k" style="left:129.10px;width:55.00px"><span>0,20</span></div></div>
<div class="tr" style="top:228.82px"><div class="tn" style="left:0.7px;width:17.80px"><span>14</span></div><div class="tc b" style="left:18.50px;width:54.80px"><span>1,94</span></div><div class="tc b" style="left:73.30px;width:55.80px"><span>1,96</span></div><div class="tc b" style="left:129.10px;width:55.00px"><span>1,92</span></div></div>
<div class="tr" style="top:246.43px"><div class="tn" style="left:0.7px;width:17.80px"><span>15</span></div><div class="tc b" style="left:18.50px;width:54.80px"><span>0,99</span></div><div class="tc k" style="left:73.30px;width:55.80px"><span>0,21</span></div><div class="tc b" style="left:129.10px;width:55.00px"><span>0,78</span></div></div>
<div class="tr" style="top:264.04px"><div class="tn" style="left:0.7px;width:17.80px"><span>16</span></div><div class="tc b" style="left:18.50px;width:54.80px"><span>3,31</span></div><div class="tc b" style="left:73.30px;width:55.80px"><span>2,72</span></div><div class="tc b" style="left:129.10px;width:55.00px"><span>2,99</span></div></div>
<div class="tr" style="top:281.65px"><div class="tn" style="left:0.7px;width:17.80px"><span>17</span></div><div class="tc k" style="left:18.50px;width:54.80px"><span>0,51</span></div><div class="tc k" style="left:73.30px;width:55.80px"><span>0,55</span></div><div class="tc k" style="left:129.10px;width:55.00px"><span>0,39</span></div></div>
<div class="tr" style="top:299.26px"><div class="tn" style="left:0.7px;width:17.80px"><span>18</span></div><div class="tc b" style="left:18.50px;width:54.80px"><span>0,79</span></div><div class="tc b" style="left:73.30px;width:55.80px"><span>0,95</span></div><div class="tc b" style="left:129.10px;width:55.00px"><span>0,77</span></div></div>
<div class="tr" style="top:316.87px"><div class="tn" style="left:0.7px;width:17.80px"><span>19</span></div><div class="tc k" style="left:18.50px;width:54.80px"><span>0,46</span></div><div class="tc k" style="left:73.30px;width:55.80px"><span>0,35</span></div><div class="tc k" style="left:129.10px;width:55.00px"><span>0,53</span></div></div>
<div class="tr" style="top:334.48px"><div class="tn" style="left:0.7px;width:17.80px"><span>20</span></div><div class="tc b" style="left:18.50px;width:54.80px"><span>0,40</span></div><div class="tc b" style="left:73.30px;width:55.80px"><span>0,41</span></div><div class="tc b" style="left:129.10px;width:55.00px"><span>0,35</span></div></div>
<div class="tr" style="top:352.09px"><div class="tn" style="left:0.7px;width:17.80px"><span>21</span></div><div class="tc b" style="left:18.50px;width:54.80px"><span>1,23</span></div><div class="tc b" style="left:73.30px;width:55.80px"><span>0,58</span></div><div class="tc b" style="left:129.10px;width:55.00px"><span>1,27</span></div></div>
<div class="tr" style="top:369.70px"><div class="tn" style="left:0.7px;width:17.80px"><span>22</span></div><div class="tc b" style="left:18.50px;width:54.80px"><span>0,44</span></div><div class="tc b" style="left:73.30px;width:55.80px"><span>0,52</span></div><div class="tc r" style="left:129.10px;width:55.00px"><span>0,23</span></div></div>
<div class="tr" style="top:387.31px"><div class="tn" style="left:0.7px;width:17.80px"><span>23</span></div><div class="tc k" style="left:18.50px;width:54.80px"><span>1,10</span></div><div class="tc k" style="left:73.30px;width:55.80px"><span>0,83</span></div><div class="tc k" style="left:129.10px;width:55.00px"><span>1,03</span></div></div>
<div class="tr" style="top:404.92px"><div class="tn" style="left:0.7px;width:17.80px"><span>24</span></div><div class="tc k" style="left:18.50px;width:54.80px"><span>0,04</span></div><div class="tc k" style="left:73.30px;width:55.80px"><span>0,17</span></div><div class="tc k" style="left:129.10px;width:55.00px"><span>0,16</span></div></div>
<div class="tr" style="top:422.53px"><div class="tn" style="left:0.7px;width:17.80px"><span>25</span></div><div class="tc b" style="left:18.50px;width:54.80px"><span>3,55</span></div><div class="tc b" style="left:73.30px;width:55.80px"><span>3,75</span></div><div class="tc b" style="left:129.10px;width:55.00px"><span>3,48</span></div></div>
<div class="tr" style="top:440.14px"><div class="tn" style="left:0.7px;width:17.80px"><span>26</span></div><div class="tc r" style="left:18.50px;width:54.80px"><span>0,25</span></div><div class="tc r" style="left:73.30px;width:55.80px"><span>0,24</span></div><div class="tc k" style="left:129.10px;width:55.00px"><span>0,12</span></div></div>
<div class="tr" style="top:457.75px"><div class="tn" style="left:0.7px;width:17.80px"><span>27</span></div><div class="tc b" style="left:18.50px;width:54.80px"><span>1,84</span></div><div class="tc b" style="left:73.30px;width:55.80px"><span>3,05</span></div><div class="tc b" style="left:129.10px;width:55.00px"><span>2,18</span></div></div>
<div class="tr" style="top:475.36px"><div class="tn" style="left:0.7px;width:17.80px"><span>28</span></div><div class="tc b" style="left:18.50px;width:54.80px"><span>0,75</span></div><div class="tc b" style="left:73.30px;width:55.80px"><span>0,55</span></div><div class="tc b" style="left:129.10px;width:55.00px"><span>0,70</span></div></div>
<div class="tr" style="top:492.97px"><div class="tn" style="left:0.7px;width:17.80px"><span>29</span></div><div class="tc k" style="left:18.50px;width:54.80px"><span>0,22</span></div><div class="tc k" style="left:73.30px;width:55.80px"><span>0,73</span></div><div class="tc k" style="left:129.10px;width:55.00px"><span>0,42</span></div></div>
<div class="tr" style="top:510.58px"><div class="tn" style="left:0.7px;width:17.80px"><span>30</span></div><div class="tc b" style="left:18.50px;width:54.80px"><span>0,36</span></div><div class="tc k" style="left:73.30px;width:55.80px"><span>0,14</span></div><div class="tc r" style="left:129.10px;width:55.00px"><span>0,26</span></div></div>
<div class="tr" style="top:528.19px"><div class="tn" style="left:0.7px;width:17.80px"><span>31</span></div><div class="tc b" style="left:18.50px;width:54.80px"><span>4,62</span></div><div class="tc b" style="left:73.30px;width:55.80px"><span>4,22</span></div><div class="tc b" style="left:129.10px;width:55.00px"><span>4,35</span></div></div>
<div class="tr" style="top:545.80px"><div class="tn" style="left:0.7px;width:17.80px"><span>32</span></div><div class="tc r" style="left:18.50px;width:54.80px"><span>0,23</span></div><div class="tc k" style="left:73.30px;width:55.80px"><span>0,14</span></div><div class="tc k" style="left:129.10px;width:55.00px"><span>0,18</span></div></div>
<div class="tr" style="top:563.41px"><div class="tn" style="left:0.7px;width:17.80px"><span>33</span></div><div class="tc b" style="left:18.50px;width:54.80px"><span>4,11</span></div><div class="tc b" style="left:73.30px;width:55.80px"><span>3,41</span></div><div class="tc b" style="left:129.10px;width:55.00px"><span>4,07</span></div></div>
<div class="tr" style="top:581.02px"><div class="tn" style="left:0.7px;width:17.80px"><span>34</span></div><div class="tc b" style="left:18.50px;width:54.80px"><span>2,40</span></div><div class="tc b" style="left:73.30px;width:55.80px"><span>2,37</span></div><div class="tc b" style="left:129.10px;width:55.00px"><span>2,34</span></div></div>
<div class="tr" style="top:598.63px"><div class="tn" style="left:0.7px;width:17.80px"><span>35</span></div><div class="tc k" style="left:18.50px;width:54.80px"><span>0,49</span></div><div class="tc k" style="left:73.30px;width:55.80px"><span>0,23</span></div><div class="tc k" style="left:129.10px;width:55.00px"><span>0,26</span></div></div>
<div class="tr" style="top:616.24px"><div class="tn" style="left:0.7px;width:17.80px"><span>36</span></div><div class="tc b" style="left:18.50px;width:54.80px"><span>9,59</span></div><div class="tc b" style="left:73.30px;width:55.80px"><span>9,72</span></div><div class="tc b" style="left:129.10px;width:55.00px"><span>9,52</span></div></div>
<div class="tr" style="top:633.85px"><div class="tn" style="left:0.7px;width:17.80px"><span>37</span></div><div class="tc k" style="left:18.50px;width:54.80px"><span>1,40</span></div><div class="tc k" style="left:73.30px;width:55.80px"><span>0,77</span></div><div class="tc k" style="left:129.10px;width:55.00px"><span>1,46</span></div></div>
  <div class="abs" style="left:-0.7px;top:-0.7px;width:200px;height:700px;border-top:1.4px solid #716F64;border-left:1.4px solid #8E8C80"></div>
</div>
<div class="abs" style="left:868.3px;top:167.6px;width:1.5px;height:641px;background:#7A786A"></div>
<div class="abs" style="left:868.3px;top:167.6px;width:185px;height:1.5px;background:#716F64"></div>
<!-- scrollbar -->
<div class="abs" style="left:1053px;top:168.3px;width:15px;height:640px;background:linear-gradient(90deg,#F3F1EC,#FEFEFB)"></div>
<div class="abs" style="left:1053.7px;top:169.7px;width:12px;height:11.5px;border:1px solid #B8CCF6;border-radius:2px;background:linear-gradient(135deg,#DCE6FC,#BCD0F8)"></div>
<svg class="abs" style="left:1055px;top:172px" width="10" height="7"><polyline points="1.5,5.5 5,2 8.5,5.5" stroke="#4D6185" stroke-width="2" fill="none"/></svg>
<div class="abs" style="left:1053.7px;top:183.5px;width:12px;height:13px;border:1px solid #B8CCF6;border-radius:2px;background:linear-gradient(135deg,#DCE6FC,#BCD0F8)"></div>
<div class="abs" style="left:1057px;top:187px;width:6px;height:1px;background:#fff;box-shadow:0 2px 0 #fff,0 4px 0 #fff"></div>
<div class="abs" style="left:1053.7px;top:795px;width:12px;height:12px;border:1px solid #B8CCF6;border-radius:2px;background:linear-gradient(135deg,#DCE6FC,#BCD0F8)"></div>
<svg class="abs" style="left:1055px;top:798px" width="10" height="7"><polyline points="1.5,1.5 5,5 8.5,1.5" stroke="#4D6185" stroke-width="2" fill="none"/></svg>

<!-- STATUS BAR -->
<div class="t" style="left:2.8px;top:819.9px">Дата/время данных: 19.12.2022 6:22:48</div>
<div class="abs" style="left:1px;top:817px;width:1067px;height:1px;background:#BEBBA8"></div>
<div class="abs" style="left:186px;top:816.5px;width:1.2px;height:13.5px;background:#A6A494"></div>
<div class="abs" style="left:187.2px;top:816.5px;width:1px;height:13.5px;background:#fff"></div>

<!-- TASKBAR -->
<div id="task" class="abs"></div>
<div class="abs" style="left:0;top:830.6px;width:82px;height:23.4px;border-radius:0 11px 11px 0;background:linear-gradient(#6CC06C 0%,#48A648 12%,#3A9A3A 45%,#2F8E2F 80%,#2A822A 100%);box-shadow:inset -2px 0 2px #1F6A1F"></div>
<svg class="abs" style="left:10.5px;top:835.5px" width="15" height="14" viewBox="0 0 17 16"><rect x="1" y="1" width="6.5" height="6.5" fill="#f0602a" transform="skewX(-8)"/><rect x="8.5" y="1" width="6.5" height="6.5" fill="#6dd140" transform="skewX(-8)"/><rect x="1.8" y="8.5" width="6.5" height="6.5" fill="#3f8ff0" transform="skewX(-8)"/><rect x="9.3" y="8.5" width="6.5" height="6.5" fill="#fad11c" transform="skewX(-8)"/></svg>
<div class="t" style="left:30.5px;top:836.6px;color:#F4FFF0;font-weight:bold;font-style:italic;font-size:13.6px;text-shadow:1px 1px 1px #205a20;transform:scaleX(0.92);transform-origin:0 0">пуск</div>
<div class="abs" style="left:90.5px;top:834.5px;width:130.7px;height:18px;border-radius:2px;background:linear-gradient(#4F93F8,#3C81F3 40%,#3A7CEE)"></div>
<div class="abs" style="left:98px;top:836px;width:12px;height:13px;background:#fff;border:1px solid #2040a0"><div class="t" style="left:0;top:1px;font-weight:bold;font-size:10px;color:#1f4fb0">W</div></div>
<div class="t" style="left:114px;top:838px;color:#fff;font-size:9.5px;transform:scaleX(0.95);transform-origin:0 0">ПЧ - Microsoft Word</div>
<div class="abs" style="left:223.3px;top:834.5px;width:133.3px;height:18px;border-radius:2px;background:linear-gradient(#1C52C8,#1E4FBE 50%,#2557CC)"></div>
<div class="abs" style="left:233px;top:837px;width:12px;height:10px;background:#c8d8f0;border:1px solid #e8f0ff"><div class="abs" style="left:1px;top:1px;width:8px;height:5px;background:#6a8ab8"></div></div>
<div class="t" style="left:248.6px;top:838px;color:#fff;font-size:9.5px;transform:scaleX(0.97);transform-origin:0 0">Монитор Ресурс-ПК...</div>
<div class="abs" style="left:1011.3px;top:830px;width:60px;height:24px;background:linear-gradient(#40B4F8,#1AA0F0 12%,#1598EC 50%,#0F8CE4);border-left:1px solid #0A60B8"></div>
<div class="abs" style="left:981px;top:837px;width:13.7px;height:12.5px;background:#1F55D0"></div>
<div class="t" style="left:981.8px;top:838.3px;color:#fff;font-size:9.5px">RU</div>
<div class="abs" style="left:1003.5px;top:834.5px;width:15px;height:15px;border-radius:50%;background:radial-gradient(circle at 40% 35%,#7ab8ff,#2a7ae8 70%,#1c5fd0);border:1px solid #bfe0ff"></div>
<svg class="abs" style="left:1007px;top:838px" width="8" height="8"><polyline points="5.5,1 2,4 5.5,7" stroke="#fff" stroke-width="2" fill="none"/></svg>
<div class="abs" style="left:1020.6px;top:836px;width:12px;height:12px;border-radius:1px;background:#d8e4e8"><div class="abs" style="left:1.5px;top:1.5px;width:9px;height:9px;border-radius:50%;background:radial-gradient(circle,#083848 30%,#1a8aa0 60%,#f0f8f8 80%)"></div></div>
<div class="t" style="left:1041.9px;top:838.5px;color:#fff;font-size:9.5px;transform:scaleX(0.95);transform-origin:0 0">0:06</div>
</body></html>
